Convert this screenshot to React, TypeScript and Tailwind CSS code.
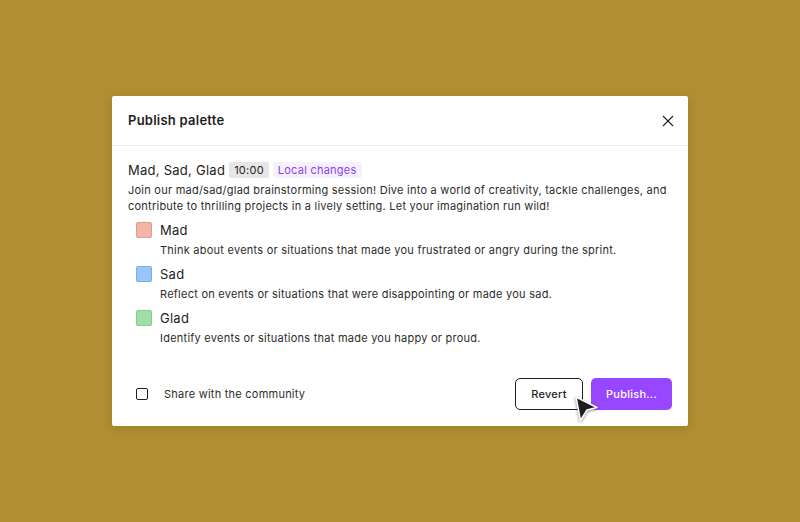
const items = [
  {
    name: "Mad",
    swatch: "bg-[#f4b5a8] border-[#e39a8b]",
    text: "Think about events or situations that made you frustrated or angry during the sprint.",
  },
  {
    name: "Sad",
    swatch: "bg-[#94c6f8] border-[#7ab0e8]",
    text: "Reflect on events or situations that were disappointing or made you sad.",
  },
  {
    name: "Glad",
    swatch: "bg-[#9fe0a8] border-[#84cc8f]",
    text: "Identify events or situations that made you happy or proud.",
  },
];

function Cursor() {
  return (
    <svg
      width="30"
      height="32"
      viewBox="0 0 30 32"
      className="pointer-events-none absolute left-[572px] top-[393px] drop-shadow-[0_1px_1.5px_rgba(0,0,0,0.45)]"
    >
      <path
        d="M4 4 L25 14.5 L15 17 L8.5 27.5 Z"
        fill="#1e1e1e"
        stroke="#fff"
        strokeWidth="1.5"
        strokeLinejoin="round"
      />
    </svg>
  );
}

export default function App() {
  return (
    <div className="relative flex h-[522px] w-[800px] items-center justify-center bg-[#b08f32] font-['Inter',sans-serif] tracking-[0.015em] text-[#1e1e1e]">
      <div className="flex h-[330px] w-[576px] flex-col rounded-[2px] bg-white shadow-[0_2px_8px_rgba(0,0,0,0.12)]">
        <div className="flex h-[50px] shrink-0 items-center justify-between border-b border-[#ececec] pl-4 pr-2">
          <h1 className="text-[13px] font-semibold">Publish palette</h1>
          <button type="button" className="flex h-6 w-6 items-center justify-center">
            <svg width="12" height="12" viewBox="0 0 12 12" fill="none" stroke="#1e1e1e" strokeWidth="1.1">
              <path d="M1 1 L11 11 M11 1 L1 11" />
            </svg>
          </button>
        </div>

        <div className="px-4 pt-4">
          <div className="flex h-4 items-center gap-1">
            <span className="text-[13px] leading-4 tracking-[0.02em]">Mad, Sad, Glad</span>
            <span className="rounded-[2px] bg-[#e6e6e6] px-[5px] text-[11px] leading-4">10:00</span>
            <span className="rounded-[2px] bg-[#f6f1ff] px-[5px] text-[11px] leading-4 text-[#8d3ef0]">
              Local changes
            </span>
          </div>
          <p className="mt-1 text-[11px] leading-4 text-[#2c2c2c]">
            Join our mad/sad/glad brainstorming session! Dive into a world of creativity, tackle challenges, and
            contribute to thrilling projects in a lively setting. Let your imagination run wild!
          </p>

          <div className="mt-2 flex flex-col gap-2 pl-2">
            {items.map((item) => (
              <div key={item.name}>
                <div className="flex h-4 items-center gap-2">
                  <span className={`h-4 w-4 rounded-[2px] border ${item.swatch}`} />
                  <span className="text-[13px] leading-4 tracking-[0.02em]">{item.name}</span>
                </div>
                <p className="mt-1 pl-6 text-[11px] leading-4 text-[#2c2c2c]">{item.text}</p>
              </div>
            ))}
          </div>
        </div>

        <div className="mt-auto flex items-center justify-between px-4 pb-4">
          <label className="flex items-center gap-4 pl-2">
            <span className="h-3 w-3 rounded-[2px] border border-[#1e1e1e]" />
            <span className="text-[11px] text-[#2c2c2c]">Share with the community</span>
          </label>
          <div className="flex gap-2">
            <button
              type="button"
              className="h-8 w-[68px] rounded-[5px] border border-[#1e1e1e] text-[11px] font-medium"
            >
              Revert
            </button>
            <button
              type="button"
              className="h-8 w-[81px] rounded-[5px] bg-[#9747ff] text-[11px] font-medium text-white"
            >
              Publish...
            </button>
          </div>
        </div>
      </div>
      <Cursor />
    </div>
  );
}
